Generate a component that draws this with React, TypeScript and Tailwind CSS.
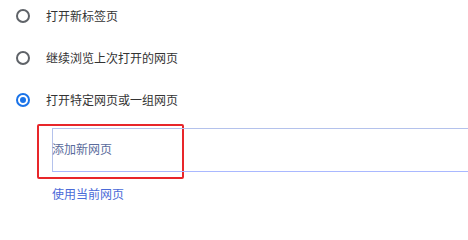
import { useState } from 'react';

const options = ['打开新标签页', '继续浏览上次打开的网页', '打开特定网页或一组网页'];

function Radio({ checked }: { checked: boolean }) {
  return (
    <span
      className={
        'flex h-[14px] w-[14px] shrink-0 items-center justify-center rounded-full border-2 ' +
        (checked ? 'border-[#1a73e8]' : 'border-[#5f6368]')
      }
    >
      {checked && <span className="h-[6px] w-[6px] rounded-full bg-[#1a73e8]" />}
    </span>
  );
}

export default function App() {
  const [selected, setSelected] = useState(2);

  return (
    <div
      className="h-[215px] w-[468px] overflow-hidden bg-white text-[12px] text-[#333]"
      style={{ fontFamily: '"Noto Sans CJK SC", "Noto Sans", sans-serif' }}
    >
      <div className="flex flex-col gap-[22px] pt-[6px]">
        {options.map((label, i) => (
          <button
            key={label}
            onClick={() => setSelected(i)}
            className="flex h-[20px] items-center gap-[16px] pl-[16px] text-left"
          >
            <Radio checked={selected === i} />
            <span className="leading-none">{label}</span>
          </button>
        ))}
      </div>

      <div className="mt-[14px] ml-[37px] w-[147px] rounded-[2px] border-2 border-[#e8262a] pt-[2px] pb-[5px] pl-[13px]">
        <div className="-mr-[300px] flex h-[44px] items-center border border-[#b4c2ec] border-b-[#a9b8ff] border-r-0 pb-[3px]">
          <span className="-ml-px leading-none text-[#5a6b9c]">添加新网页</span>
        </div>
      </div>

      <div className="mt-[9px] pl-[52px] leading-none text-[#4a6ad8]">使用当前网页</div>
    </div>
  );
}
